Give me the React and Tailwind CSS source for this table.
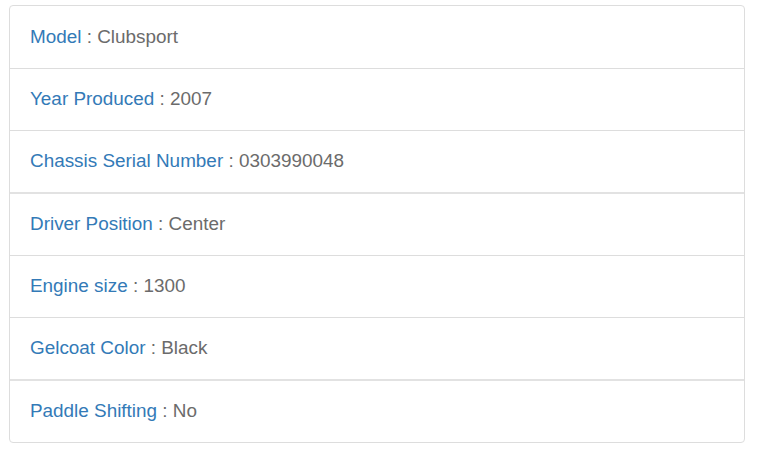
const specs = [
  { label: "Model", value: "Clubsport" },
  { label: "Year Produced", value: "2007" },
  { label: "Chassis Serial Number", value: "0303990048", thick: true },
  { label: "Driver Position", value: "Center" },
  { label: "Engine size", value: "1300" },
  { label: "Gelcoat Color", value: "Black", thick: true },
  { label: "Paddle Shifting", value: "No", last: true },
];

const App = () => {
  return (
    <div
      className="w-[758px] h-[453px] bg-white pt-[5px] pl-[9px]"
      style={{ fontFamily: '"Liberation Sans", Arial, sans-serif' }}
    >
      <ul className="w-[736px] border border-[#dddddd] rounded-[4px] bg-white">
        {specs.map((s, i) => (
          <li
            key={s.label}
            className={
              "flex items-center pl-[20px] text-[18.9px] " +
              (s.last
                ? "h-[61px]"
                : s.thick
                ? "h-[63px] border-b-2 border-[#e2e2e2]"
                : i === 0
                ? "h-[63px] border-b border-[#dddddd]"
                : "h-[62px] border-b border-[#dddddd]")
            }
          >
            <span className="text-[#337ab7]">{s.label}</span>
            <span className="text-[#6b6b6b] whitespace-pre"> : {s.value}</span>
          </li>
        ))}
      </ul>
    </div>
  );
};

export default App;
